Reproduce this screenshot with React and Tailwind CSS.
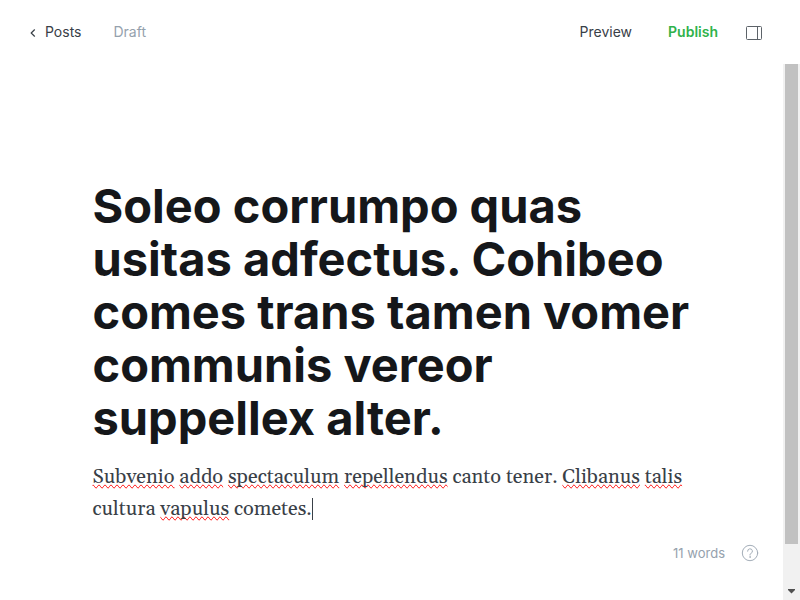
import React from "react";

const sentence = [
  ["Subvenio", true],
  ["addo", true],
  ["spectaculum", true],
  ["repellendus", true],
  ["canto", false],
  ["tener.", false],
  ["Clibanus", true],
  ["talis", true],
  ["cultura", false],
  ["vapulus", true],
  ["cometes.", false],
];

function Header() {
  return (
    <header className="flex h-16 shrink-0 items-center justify-between pr-[38px] pl-[30px] text-sm">
      <nav className="flex items-center gap-8">
        <a href="#posts" className="flex items-center gap-[9px] text-[#394047]">
          <svg viewBox="0 0 6 8" className="mt-0.5 h-2 w-1.5" fill="none" stroke="currentColor" strokeWidth="1.2" strokeLinecap="round" strokeLinejoin="round" aria-hidden="true">
            <path d="M4.5 0.8 1.2 4l3.3 3.2" />
          </svg>
          Posts
        </a>
        <span className="text-[#95a1ad]">Draft</span>
      </nav>
      <div className="flex items-center">
        <button type="button" className="text-[#394047]">Preview</button>
        <button type="button" className="ml-9 font-semibold text-[#30b24a]">Publish</button>
        <button type="button" aria-label="Settings" className="ml-7 text-[#5d6369]">
          <svg viewBox="0 0 16 16" className="mt-0.5 h-4 w-4" fill="none" stroke="currentColor" aria-hidden="true">
            <rect x="0.5" y="1.5" width="15" height="13" rx="1" />
            <path d="M11.5 1.5v13" />
          </svg>
        </button>
      </div>
    </header>
  );
}

function Scrollbar() {
  return (
    <div className="flex w-[17px] shrink-0 flex-col justify-between bg-[#f1f1f1] px-0.5" aria-hidden="true">
      <div className="h-[480px] bg-[#c1c1c1]" />
      <svg viewBox="0 0 13 17" className="h-[17px] w-[13px]" fill="#505050">
        <path d="M3 6h7v1L6.5 10.5 3 7z" />
      </svg>
    </div>
  );
}

export default function App() {
  return (
    <div className="flex h-screen flex-col bg-white font-['Inter',sans-serif]">
      <Header />
      <div className="flex min-h-0 flex-1">
        <main className="flex min-w-0 flex-1 flex-col overflow-hidden">
          <div className="mx-auto w-full max-w-[598px] flex-1 pt-[115px]">
            <textarea
              aria-label="Post title"
              rows={5}
              className="block w-full resize-none overflow-hidden text-[47px] leading-[53px] font-bold text-[#15171a] outline-none"
              defaultValue="Soleo corrumpo quas usitas adfectus. Cohibeo comes trans tamen vomer communis vereor suppellex alter."
            />
            <div
              role="textbox"
              aria-label="Post content"
              className="mt-[17px] font-[Georgia,Gelasio,'Liberation_Serif',serif] text-xl leading-8 text-[#394047]"
            >
              {sentence.map(([word, marked], i) => (
                <React.Fragment key={word}>
                  <span className={marked ? "[text-decoration-line:spelling-error]" : ""}>{word}</span>
                  {i < sentence.length - 1 ? " " : ""}
                </React.Fragment>
              ))}
              <span className="inline-block h-[22px] w-px bg-[#394047] align-[-5px]" />
            </div>
          </div>
          <footer className="flex items-center justify-end gap-4 pr-6 pb-[37px] text-[13px] leading-5 text-[#95a1ad]">
            <span>11 words</span>
            <a href="#help" aria-label="Help" className="text-[#a3adb8]">
              <svg viewBox="0 0 18 18" className="h-[18px] w-[18px]" fill="none" stroke="currentColor" strokeLinecap="round" strokeLinejoin="round" aria-hidden="true">
                <circle cx="9" cy="9" r="7.7" />
                <path d="M6.6 7.2a2.4 2.4 0 1 1 3.4 2.2c-.6.3-1 .7-1 1.3v.4" />
                <circle cx="9" cy="13" r="0.3" />
              </svg>
            </a>
          </footer>
        </main>
        <Scrollbar />
      </div>
    </div>
  );
}
